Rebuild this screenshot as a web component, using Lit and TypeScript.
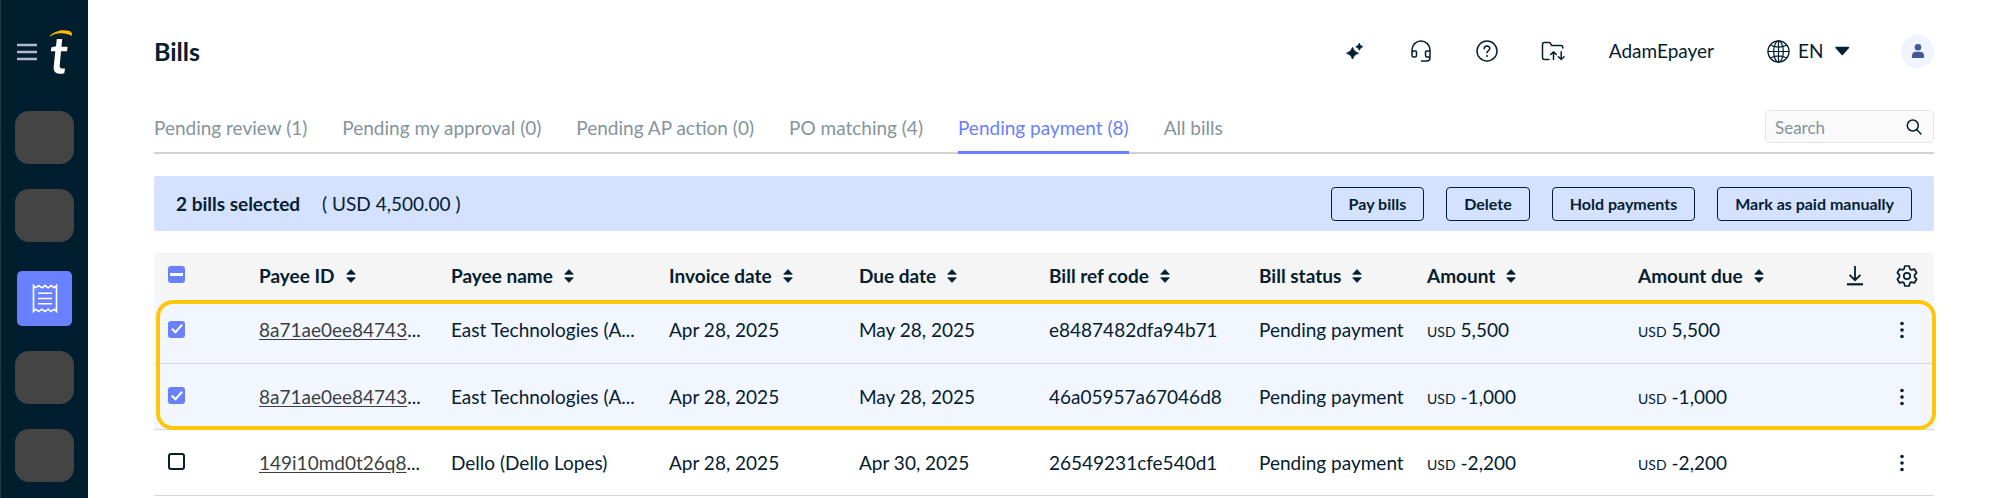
import { LitElement, html, css, svg } from "lit";
import { customElement, state } from "lit/decorators.js";

interface Bill {
  id: string;
  name: string;
  invoiced: string;
  due: string;
  ref: string;
  status: string;
  amount: string;
  amountDue: string;
  selected: boolean;
}

const TABS = [
  "Pending review (1)",
  "Pending my approval (0)",
  "Pending AP action (0)",
  "PO matching (4)",
  "Pending payment (8)",
  "All bills",
];

const COLUMNS = [
  "Payee ID",
  "Payee name",
  "Invoice date",
  "Due date",
  "Bill ref code",
  "Bill status",
  "Amount",
  "Amount due",
];

const ACTIONS = ["Pay bills", "Delete", "Hold payments", "Mark as paid manually"];

const sortIcon = html`<svg class="sort" viewBox="0 0 10 14" width="10" height="14" aria-hidden="true">
  <path d="M5 .6 9.3 5.2H.7Z M5 13.4 9.3 8.8H.7Z" fill="currentColor" stroke="currentColor" stroke-width=".8" stroke-linejoin="round" />
</svg>`;

const line = (body: unknown, size = 24, width = 1.5) => html`<svg
  viewBox="0 0 24 24" width=${size} height=${size} fill="none" stroke="currentColor"
  stroke-width=${width} stroke-linecap="round" stroke-linejoin="round" aria-hidden="true">${body}</svg>`;

@customElement("app-root")
export class AppRoot extends LitElement {
  static styles = css`
    :host {
      display: block;
      font-family: Lato, Carlito, "Open Sans", sans-serif;
      font-size: 19px;
      line-height: 24px;
      color: #04202f;
      background: #fff;
    }
    *, *::before { box-sizing: border-box; }
    button, input, select { font: inherit; color: inherit; }
    .page { display: flex; height: 100vh; overflow: hidden; }

    .side {
      flex: none;
      width: 88px;
      display: flex;
      flex-direction: column;
      align-items: center;
      background: #001e2e;
      border-left: 1px solid #1c3543;
    }
    .brand {
      display: flex;
      align-items: center;
      gap: 12px;
      height: 111px;
      padding-bottom: 8px;
    }
    .nav { display: flex; flex-direction: column; align-items: center; gap: 25px; }
    .icon { display: flex; align-items: center; justify-content: center; padding: 0; border: 0; background: none; }
    .slot { width: 59px; height: 53px; border: 0; border-radius: 14px; background: #444; }
    .current {
      width: 55px;
      height: 55px;
      margin: 4px 0 0;
      border-radius: 5px;
      background: #6980ff;
      color: #fff;
    }

    .main { flex: 1; min-width: 0; padding: 33px 65px 0 66px; }
    .top { display: flex; align-items: center; height: 36px; }
    .title { margin: 0 auto 0 0; font-size: 25px; line-height: 32px; font-weight: 700; }
    .tools { display: flex; gap: 42px; margin-right: 44px; }
    .user { margin-right: 53px; }
    .lang { display: flex; align-items: center; gap: 8px; margin-right: 51px; }
    .lang select { appearance: none; border: 0; padding: 0; background: none; }
    .avatar { width: 33px; height: 33px; border-radius: 50%; background: #f0f4ff; color: #455a94; }

    .tabs {
      display: flex;
      align-items: flex-end;
      gap: 35px;
      height: 85px;
      border-bottom: 2px solid #d0d2d3;
    }
    .tab {
      height: 42px;
      margin-bottom: -2px;
      padding: 0 0 8px;
      border: 0;
      border-bottom: 3px solid transparent;
      background: none;
      color: #84949b;
      white-space: nowrap;
    }
    .tab.on { color: #6980ff; border-color: #6980ff; }
    .search {
      display: flex;
      align-items: center;
      width: 169px;
      height: 33px;
      margin: 0 0 9px auto;
      padding: 0 11px 0 9px;
      border: 1px solid #e4e5e6;
      border-radius: 5px;
      background: #fafafa;
      font-size: 17px;
    }
    .search input { flex: 1; min-width: 0; padding: 2px 0 0; border: 0; outline: 0; background: none; }
    .search input::placeholder { color: #84949b; opacity: 1; }

    .bulk {
      display: flex;
      align-items: center;
      gap: 22px;
      height: 55px;
      margin: 22px 0;
      padding: 0 22px;
      border-radius: 3px;
      background: #d5e2ff;
    }
    .sum { margin-right: auto; }
    .act {
      height: 34px;
      padding: 0 17px;
      border: 1px solid #04202f;
      border-radius: 4px;
      background: none;
      font-size: 16px;
      line-height: 24px;
      font-weight: 700;
    }

    .wrap { position: relative; }
    table { width: 100%; table-layout: fixed; border-collapse: collapse; }
    th, td { padding: 1px 0 0 14px; text-align: left; white-space: nowrap; }
    th { height: 44px; background: #f5f5f5; font-weight: 700; }
    td { height: 66px; border-bottom: 1px solid #d6d8da; }
    tr.sel td { background: #f2f6ff; }
    th .sort { margin-left: 11px; }
    td a { color: #3c3f41; text-underline-offset: 2px; }
    .cur { margin-right: 5px; font-size: 14px; line-height: 16px; }
    .end { display: flex; align-items: center; justify-content: flex-end; gap: 32px; padding-right: 16px; }
    .end.row { padding-right: 20px; }
    .box {
      appearance: none;
      display: grid;
      place-content: center;
      width: 17px;
      height: 17px;
      margin: 0 0 2px;
      border: 2px solid #04202f;
      border-radius: 3px;
      background: #fff;
    }
    .box:checked, .box:indeterminate { border-color: #6980ff; background: #6980ff; }
    .box:checked::before {
      content: "";
      width: 6px;
      height: 11px;
      margin-top: -3px;
      border: solid #fff;
      border-width: 0 2px 2px 0;
      transform: rotate(42deg);
    }
    .box:indeterminate::before { content: ""; width: 13px; height: 3px; background: #fff; }
    .ring {
      position: absolute;
      inset: 47px -2px auto 2px;
      height: 130px;
      border: 4px solid #ffc60a;
      border-radius: 17px;
      pointer-events: none;
    }
  `;

  @state() private bills: Bill[] = [
    { id: "8a71ae0ee84743", name: "East Technologies (A...", invoiced: "Apr 28, 2025", due: "May 28, 2025", ref: "e8487482dfa94b71", status: "Pending payment", amount: "5,500", amountDue: "5,500", selected: true },
    { id: "8a71ae0ee84743", name: "East Technologies (A...", invoiced: "Apr 28, 2025", due: "May 28, 2025", ref: "46a05957a67046d8", status: "Pending payment", amount: "-1,000", amountDue: "-1,000", selected: true },
    { id: "149i10md0t26q8", name: "Dello (Dello Lopes)", invoiced: "Apr 28, 2025", due: "Apr 30, 2025", ref: "26549231cfe540d1", status: "Pending payment", amount: "-2,200", amountDue: "-2,200", selected: false },
  ];

  private toggle(index: number) {
    this.bills = this.bills.map((b, i) => (i === index ? { ...b, selected: !b.selected } : b));
  }

  private money(value: string) {
    return html`<span class="cur">USD</span>${value}`;
  }

  private renderSide() {
    return html`<aside class="side">
      <div class="brand">
        <button class="icon" aria-label="Menu">
          <svg viewBox="0 0 20 18" width="20" height="18" aria-hidden="true">
            <path d="M0 2h20M0 9h20M0 16h20" stroke="#b5b8d0" stroke-width="2.4" />
          </svg>
        </button>
        <svg viewBox="0 0 24 46" width="24" height="46" aria-hidden="true">
          <path d="M.5 7.3C5.5 1.500 14 .4 19.500 1.700 22 2.300 23.500 3.500 22.800 7 16.500 3.600 7 3 .8 7.800Z" fill="#ffb900" />
          <path d="M7.800 10H13.200L12.500 17.700H18.600L18 22.300H12L10.700 36.500Q10.500 39.500 13 39.500H16L15.300 44.200C8 46 4.200 43.400 4.700 38L6.300 22.300H1.800L2.400 18.200 7 17.300Z" fill="#fff" />
        </svg>
      </div>
      <nav class="nav">
        <button class="slot" aria-label="Home"></button>
        <button class="slot" aria-label="Payees"></button>
        <button class="icon current" aria-label="Bills">
          <svg viewBox="0 0 26 29" width="26" height="29" fill="none" stroke="currentColor" stroke-width="1.6" aria-hidden="true">
            <path d="M1.500 1.500 3.800 3.800 6.800 1.500 9.900 3.800 13 1.500 16.100 3.800 19.200 1.500 22.200 3.800 24.500 1.500V27.500L22.200 25.200 19.200 27.500 16.100 25.200 13 27.500 9.900 25.200 6.800 27.500 3.800 25.200 1.500 27.500Z" />
            <path d="M6 9.300H20M6 14.500H20M6 19.700H20" />
          </svg>
        </button>
        <button class="slot" aria-label="Payments"></button>
        <button class="slot" aria-label="Reports"></button>
      </nav>
    </aside>`;
  }

  private renderTop() {
    return html`<header class="top">
      <h1 class="title">Bills</h1>
      <div class="tools">
        <button class="icon" aria-label="Assistant">
          <svg viewBox="0 0 24 24" width="24" height="24" fill="currentColor" aria-hidden="true">
            <path d="M9.500 8.300Q10.700 13 15.500 14.200 10.700 15.400 9.500 20.100 8.300 15.400 3.500 14.200 8.300 13 9.500 8.300ZM16.300 4.200Q17 7 19.800 7.700 17 8.400 16.300 11.200 15.600 8.400 12.800 7.700 15.600 7 16.300 4.200Z" stroke="currentColor" stroke-width=".8" stroke-linejoin="round" />
          </svg>
        </button>
        <button class="icon" aria-label="Support">
          ${line(svg`<path d="M3 16V11A9 9 0 0 1 21 11V18.500Q21 22 18 22H12.500M3 16.500V14Q3 12 5 12H6.500Q7.500 12 7.500 13V16.500Q7.500 18 6 18H4.500Q3 18 3 16.500ZM21 12H17.500Q16.500 12 16.500 13V16.500Q16.500 18 18 18H21" />`)}
        </button>
        <button class="icon" aria-label="Help">
          ${line(svg`<circle cx="12" cy="12" r="10" /><path d="M9.200 9.700Q9.300 7 12 7 14.800 7.100 14.800 9.600C14.800 11.500 12 11.600 12 13.700" /><path d="M12 16.900V17" stroke-width="2" />`)}
        </button>
        <button class="icon" aria-label="Transfers">
          ${line(svg`<path d="M8 20.500H3.500Q1.500 20.500 1.500 18.500V5.200Q1.500 3.500 3.200 3.500H8Q9 3.500 9.500 4.400L10.600 6.500H20Q21.800 6.500 21.800 8.500V9M12.500 20.500V13M9.700 15.500 12.500 12.700 15.300 15.500M20.200 12.700V20.200M17.400 17.700 20.200 20.500 23 17.700" />`)}
        </button>
      </div>
      <span class="user">AdamEpayer</span>
      <div class="lang">
        ${line(svg`<circle cx="12" cy="12" r="11" /><ellipse cx="12" cy="12" rx="5" ry="11" /><path d="M12 1V23M1 12H23M4 5.500Q12 9.300 20 5.500M4 18.500Q12 14.700 20 18.500" />`, 23, 1.3)}
        <select aria-label="Language"><option>EN</option></select>
        <svg viewBox="0 0 18 10" width="18" height="10" aria-hidden="true">
          <path d="M4 1.500H16.500L10.250 8.500Z" fill="#04202f" stroke="#04202f" stroke-width="1.500" stroke-linejoin="round" />
        </svg>
      </div>
      <button class="icon avatar" aria-label="Account">
        <svg viewBox="0 0 12 14" width="12" height="14" fill="currentColor" aria-hidden="true">
          <circle cx="6" cy="3.300" r="3.300" /><path d="M0 14V12Q0 7.800 4.200 7.800H7.800Q12 7.800 12 12V13Q12 14 11 14Z" />
        </svg>
      </button>
    </header>`;
  }

  private renderTable() {
    const picked = this.bills.filter((b) => b.selected).length;
    const all = picked === this.bills.length;
    return html`<div class="wrap">
      <table>
        <colgroup>
          <col width="91" /><col width="192" /><col width="218" /><col width="190" /><col width="190" />
          <col width="210" /><col width="168" /><col width="211" /><col width="190" /><col width="120" />
        </colgroup>
        <thead>
          <tr>
            <th><input class="box" type="checkbox" aria-label="Select all bills" .checked=${all} .indeterminate=${picked > 0 && !all} /></th>
            ${COLUMNS.map((c) => html`<th scope="col">${c}${sortIcon}</th>`)}
            <th>
              <div class="end">
                <button class="icon" aria-label="Download">
                  <svg viewBox="0 0 18 20" width="18" height="20" fill="none" stroke="#04202f" stroke-width="1.800" aria-hidden="true">
                    <path d="M9 0V14M3.500 8.800 9 14.200 14.500 8.800" /><path d="M1 18.300H17" stroke-width="2.200" />
                  </svg>
                </button>
                <button class="icon" aria-label="Table settings">
                  <svg viewBox="0 0 22 22" width="22" height="22" fill="none" stroke="currentColor" stroke-width="1.700" stroke-linejoin="round" aria-hidden="true">
                    <path d="M8.800 1H13.200L13.900 3.900 15.600 4.900 18.400 4 20.600 7.800 18.600 9.900V12.100L20.600 14.200 18.400 18 15.600 17.100 13.900 18.100 13.200 21H8.800L8.100 18.100 6.400 17.100 3.600 18 1.400 14.200 3.400 12.100V9.900L1.400 7.800 3.600 4 6.400 4.900 8.100 3.900Z" />
                    <circle cx="11" cy="11" r="3.200" />
                  </svg>
                </button>
              </div>
            </th>
          </tr>
        </thead>
        <tbody>
          ${this.bills.map(
            (b, i) => html`<tr class=${b.selected ? "sel" : ""}>
              <td><input class="box" type="checkbox" aria-label="Select bill ${b.ref}" .checked=${b.selected} @change=${() => this.toggle(i)} /></td>
              <td><a href="#${b.id}">${b.id}</a>...</td>
              <td>${b.name}</td>
              <td>${b.invoiced}</td>
              <td>${b.due}</td>
              <td>${b.ref}</td>
              <td>${b.status}</td>
              <td>${this.money(b.amount)}</td>
              <td>${this.money(b.amountDue)}</td>
              <td>
                <div class="end row">
                  <button class="icon" aria-label="More actions">
                    <svg viewBox="0 0 24 18" width="24" height="18" fill="currentColor" aria-hidden="true">
                      <circle cx="12" cy="2.500" r="1.800" /><circle cx="12" cy="9" r="1.800" /><circle cx="12" cy="15.500" r="1.800" />
                    </svg>
                  </button>
                </div>
              </td>
            </tr>`,
          )}
        </tbody>
      </table>
      <div class="ring"></div>
    </div>`;
  }

  render() {
    return html`<div class="page">
      ${this.renderSide()}
      <main class="main">
        ${this.renderTop()}
        <nav class="tabs">
          ${TABS.map((t, i) => html`<button class="tab ${i === 4 ? "on" : ""}">${t}</button>`)}
          <label class="search">
            <input type="text" placeholder="Search" aria-label="Search bills" />
            <svg viewBox="0 0 16 16" width="16" height="16" fill="none" stroke="currentColor" stroke-width="1.500" stroke-linecap="round" aria-hidden="true">
              <circle cx="6.800" cy="6.500" r="5.500" /><path d="M10.800 10.700 15 15" />
            </svg>
          </label>
        </nav>
        <section class="bulk">
          <strong>2 bills selected</strong>
          <span class="sum">( USD 4,500.00 )</span>
          ${ACTIONS.map((a) => html`<button class="act">${a}</button>`)}
        </section>
        ${this.renderTable()}
      </main>
    </div>`;
  }
}
